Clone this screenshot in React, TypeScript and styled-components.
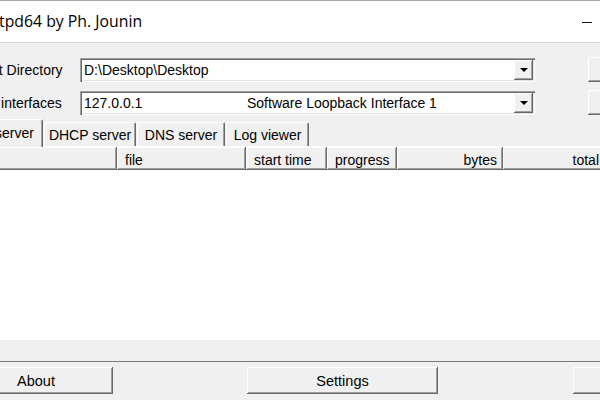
import React from 'react'
import styled, { createGlobalStyle, css } from 'styled-components'

const GlobalStyle = createGlobalStyle`
  html, body {
    margin: 0;
    padding: 0;
    background: #f0f0f0;
    overflow: hidden;
  }
  body {
    width: 600px;
    height: 400px;
  }
`

const raised = css`
  box-shadow: inset -1px -1px #696969, inset 1px 1px #ffffff, inset -2px -2px #a0a0a0,
    inset 2px 2px #f0f0f0;
`

const sunken = css`
  box-shadow: inset 1px 1px #a0a0a0, inset 2px 2px #696969, inset -1px -1px #ffffff,
    inset -2px -2px #e3e3e3;
`

// the screenshot cuts the window on the left, so the window starts off-page
const Window = styled.div`
  width: 758px;
  height: 400px;
  margin-left: -56px;
  background: #f0f0f0;
  font-family: 'Liberation Sans', Arial, sans-serif;
  font-size: 14px;
  color: #000;
  display: flex;
  flex-direction: column;
`

const TitleBar = styled.div`
  height: 43px;
  box-sizing: border-box;
  background: #fff;
  border-top: 1px solid #a8a8a8;
  border-bottom: 1px solid #d4d4d4;
  display: flex;
  align-items: center;
  padding-left: 12px;
`

const AppIcon = styled.svg`
  width: 16px;
  height: 16px;
  margin-right: 13px;
`

const Title = styled.span`
  font-family: 'Open Sans', 'Noto Sans', sans-serif;
  font-size: 15.8px;
  flex: 1;
  margin-top: -1px;
`

const WinButton = styled.div`
  width: 46px;
  height: 41px;
  display: flex;
  align-items: center;
  justify-content: center;
`

const Body = styled.div`
  flex: 1;
  display: flex;
  flex-direction: column;
`

const FormRows = styled.div`
  display: flex;
  flex-direction: column;
  gap: 9px;
  padding: 14px 0 0 12px;
`

const FormRow = styled.div`
  display: grid;
  grid-template-columns: 124px 455px 53px 110px;
  height: 24px;
  align-items: center;
`

const Label = styled.span`
  white-space: nowrap;
`

const Combo = styled.div`
  ${sunken};
  height: 24px;
  background: #fff;
  box-sizing: border-box;
  display: flex;
  align-items: center;
  padding: 0 2px 0 4px;
`

const ComboText = styled.span<{ $w?: number }>`
  white-space: nowrap;
  ${(p) => (p.$w ? `width: ${p.$w}px; flex: none;` : 'flex: 1;')}
`

const DropButton = styled.div`
  ${raised};
  margin-left: auto;
  width: 19px;
  height: 20px;
  background: #f0f0f0;
  display: flex;
  align-items: center;
  justify-content: center;
`

const Arrow = styled.div`
  width: 0;
  height: 0;
  border-left: 4px solid transparent;
  border-right: 4px solid transparent;
  border-top: 4px solid #000;
  margin: 1px 0 0 1px;
`

const SideButton = styled.button`
  ${raised};
  height: 25px;
  border: none;
  background: #f0f0f0;
  font: inherit;
  color: #000;
`

const TabStrip = styled.div`
  display: flex;
  align-items: flex-end;
  height: 26px;
  margin-top: 6px;
  padding-left: 14px;
`

const Tab = styled.div<{ $active?: boolean; $w: number }>`
  width: ${(p) => p.$w}px;
  flex: none;
  height: ${(p) => (p.$active ? 28 : 24)}px;
  box-sizing: border-box;
  padding-top: ${(p) => (p.$active ? 5 : 4)}px;
  text-align: center;
  margin-left: ${(p) => (p.$active ? 0 : 1)}px;
  margin-bottom: ${(p) => (p.$active ? -1 : 0)}px;
  position: relative;
  z-index: ${(p) => (p.$active ? 1 : 0)};
  background: #f0f0f0;
  border-top: 1px solid #fff;
  border-left: 1px solid #fff;
  border-right: 1px solid #696969;
  box-shadow: inset -1px 0 #a0a0a0;
  border-radius: 2px 2px 0 0;
  white-space: nowrap;
`

const Panel = styled.div`
  margin-left: 12px;
  border-top: 1px solid #fff;
  border-left: 1px solid #fff;
  border-bottom: 1px solid #7a7a7a;
  display: flex;
  flex-direction: column;
`

const HeaderRow = styled.div`
  display: flex;
  height: 23px;
`

const HeaderCell = styled.div<{ $w: number; $right?: boolean }>`
  ${raised};
  width: ${(p) => p.$w}px;
  flex: none;
  box-sizing: border-box;
  padding: 5px 6px 0 8px;
  text-align: ${(p) => (p.$right ? 'right' : 'left')};
  white-space: nowrap;
`

const ListArea = styled.div`
  height: 170px;
  background: #fff;
`

const StatusStrip = styled.div`
  height: 21px;
  background: #f0f0f0;
`

const ButtonBar = styled.div`
  display: flex;
  margin-top: 5px;
  padding-left: 15px;
`

const BarButton = styled.button<{ $w: number; $gap: number }>`
  ${raised};
  flex: none;
  box-sizing: border-box;
  width: ${(p) => p.$w}px;
  margin: 0 ${(p) => p.$gap}px 0 0;
  height: 27px;
  border: none;
  background: #f0f0f0;
  font: inherit;
  font-size: 14.5px;
  color: #000;
  padding: 0;
`

const columns = [
  { name: 'peer', w: 160 },
  { name: 'file', w: 129 },
  { name: 'start time', w: 81 },
  { name: 'progress', w: 70 },
  { name: 'bytes', w: 106, right: true },
  { name: 'total', w: 102, right: true },
  { name: 'timeout', w: 90 },
]

const tabs = [
  { name: 'Tftp server', w: 85, active: true },
  { name: 'DHCP server', w: 92 },
  { name: 'DNS server', w: 88 },
  { name: 'Log viewer', w: 83 },
]

export default function App() {
  return (
    <>
      <GlobalStyle />
      <Window>
        <TitleBar>
          <AppIcon viewBox="0 0 16 16">
            <rect x="1" y="2" width="14" height="12" fill="#2a6fc9" />
            <rect x="3" y="4" width="10" height="2" fill="#fff" />
          </AppIcon>
          <Title>Tftpd64 by Ph. Jounin</Title>
          <WinButton>
            <svg width="10" height="10" viewBox="0 0 10 10">
              <line x1="-1.5" y1="5.5" x2="11.5" y2="5.5" stroke="#111" strokeWidth="1" />
            </svg>
          </WinButton>
          <WinButton>
            <svg width="10" height="10" viewBox="0 0 10 10">
              <rect x="0.5" y="0.5" width="9" height="9" fill="none" stroke="#111" />
            </svg>
          </WinButton>
          <WinButton>
            <svg width="10" height="10" viewBox="0 0 10 10">
              <path d="M0 0L10 10M10 0L0 10" stroke="#111" />
            </svg>
          </WinButton>
        </TitleBar>

        <Body>
          <FormRows>
            <FormRow>
              <Label>Current Directory</Label>
              <Combo>
                <ComboText>D:\Desktop\Desktop</ComboText>
                <DropButton>
                  <Arrow />
                </DropButton>
              </Combo>
              <span />
              <SideButton>Browse</SideButton>
            </FormRow>
            <FormRow>
              <Label>Server interfaces</Label>
              <Combo>
                <ComboText $w={163}>127.0.0.1</ComboText>
                <ComboText>Software Loopback Interface 1</ComboText>
                <DropButton>
                  <Arrow />
                </DropButton>
              </Combo>
              <span />
              <SideButton>Show Dir</SideButton>
            </FormRow>
          </FormRows>

          <TabStrip>
            {tabs.map((t) => (
              <Tab key={t.name} $w={t.w} $active={t.active}>
                {t.name}
              </Tab>
            ))}
          </TabStrip>

          <Panel>
            <HeaderRow>
              {columns.map((c) => (
                <HeaderCell key={c.name} $w={c.w} $right={c.right}>
                  {c.name}
                </HeaderCell>
              ))}
            </HeaderRow>
            <ListArea />
            <StatusStrip />
          </Panel>

          <ButtonBar>
            <BarButton $w={154} $gap={134}>About</BarButton>
            <BarButton $w={191} $gap={135}>Settings</BarButton>
            <BarButton $w={154} $gap={0}>Help</BarButton>
          </ButtonBar>
        </Body>
      </Window>
    </>
  )
}
